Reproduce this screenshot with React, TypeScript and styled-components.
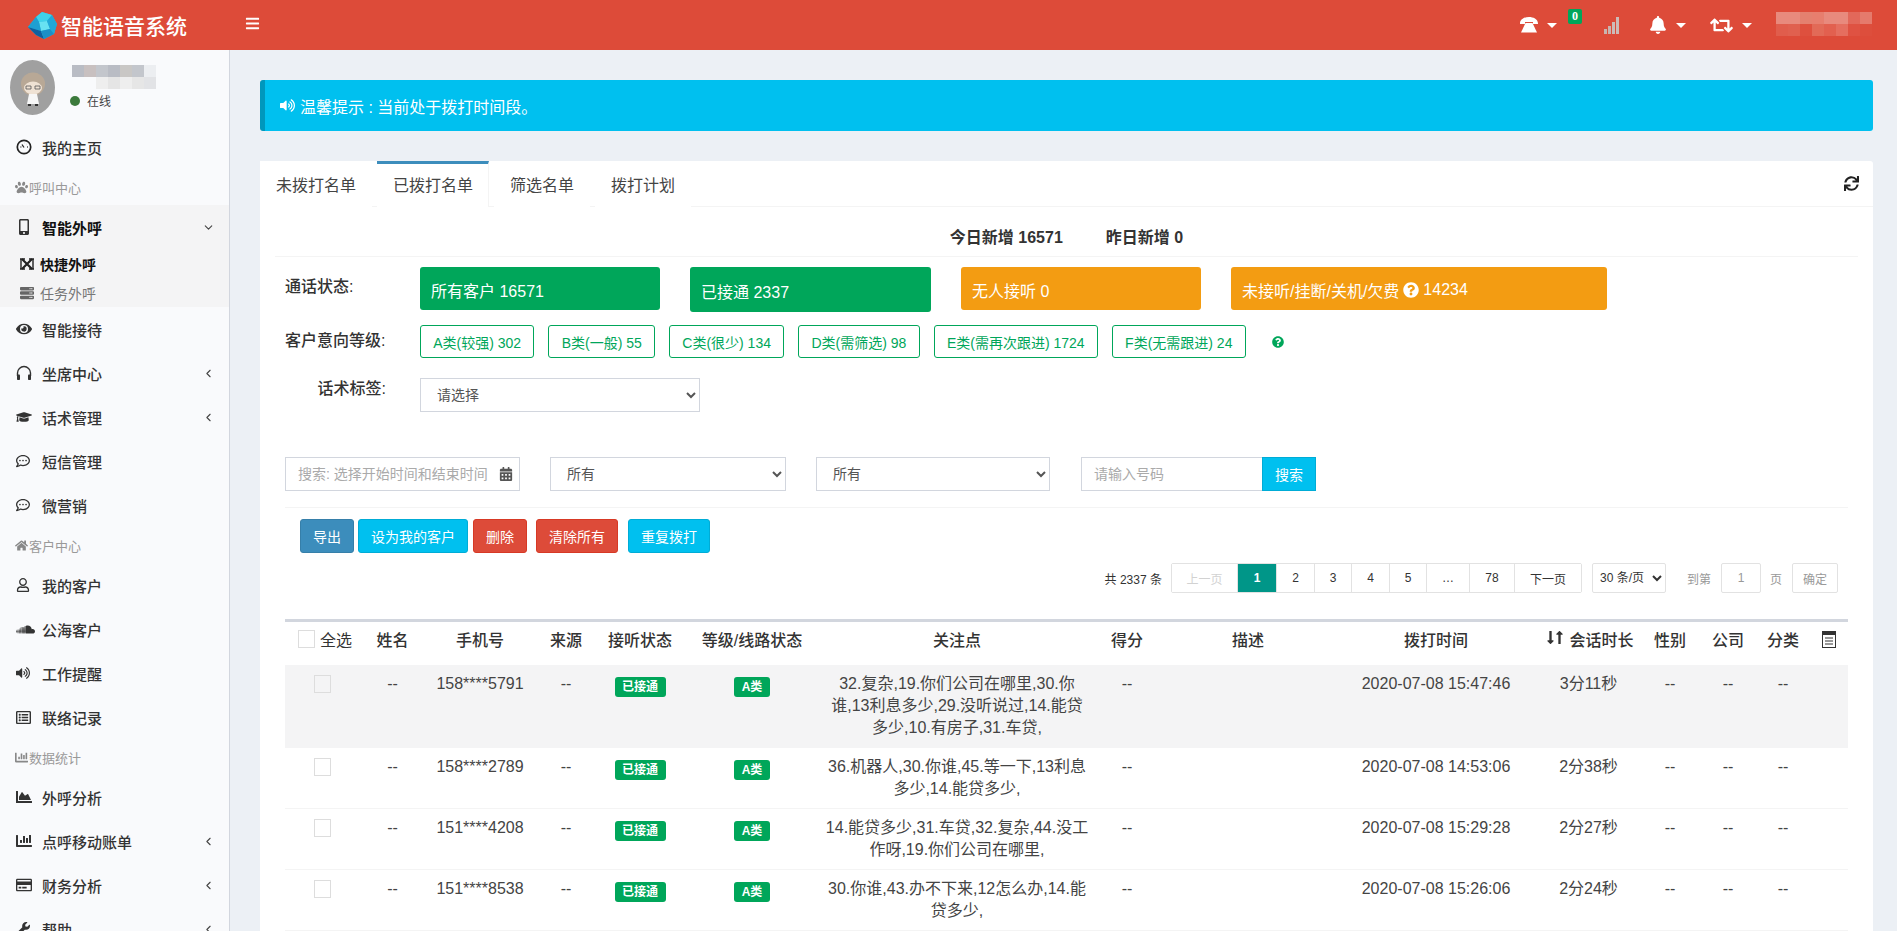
import React from 'react';
import styled, { createGlobalStyle } from 'styled-components';
import {
  FaBars, FaBell, FaRetweet, FaSync, FaEye, FaGraduationCap, FaRegCommentDots, FaPaw, FaHome,
  FaRegUser, FaSoundcloud, FaVolumeUp, FaRegListAlt, FaChartBar, FaChartArea, FaRegCreditCard, FaWrench,
  FaMobileAlt, FaServer, FaQuestionCircle, FaCalendarAlt, FaLongArrowAltDown, FaLongArrowAltUp,
} from 'react-icons/fa';
import { FiChevronDown, FiChevronLeft } from 'react-icons/fi';

const Global = createGlobalStyle`
  html, body { margin: 0; padding: 0; height: 100%; overflow: hidden; }
  body { font-family: "Liberation Sans", "Noto Sans CJK SC", sans-serif; color: #333; background: #ecf0f5; }
  * { box-sizing: border-box; }
`;

const Page = styled.div`display:flex;flex-direction:column;height:931px;overflow:hidden;`;
const TopBar = styled.header`flex:none;height:50px;background:#dd4b39;display:flex;align-items:center;color:#fff;padding-right:25px;`;
const Brand = styled.div`width:230px;display:flex;align-items:center;padding-left:28px;gap:3px;font-size:21px;font-weight:500;`;
const Toggle = styled.div`display:flex;font-size:15px;padding-left:15px;margin-top:-4px;`;
const NavRight = styled.nav`margin-left:auto;display:flex;align-items:center;`;
const NavItem = styled.div<{ $w: number }>`position:relative;width:${p => p.$w}px;display:flex;align-items:center;gap:9px;`;
const Caret = styled.span`width:0;height:0;border-left:5px solid transparent;border-right:5px solid transparent;border-top:5px solid #fff;`;
const NavBadge = styled.span`position:absolute;left:48px;top:-8px;width:14px;height:15px;background:#00a65a;border-radius:2px;font:bold 12px/14px "Liberation Serif",serif;text-align:center;color:#fff;`;
const MosaicBox = styled.svg`display:block;flex:none;`;

const Body = styled.div`flex:1;display:flex;min-height:0;`;
const Sidebar = styled.aside`flex:none;width:230px;background:#f9fafc;border-right:1px solid #d2d6de;overflow:hidden;`;
const UserPanel = styled.div`height:75px;display:flex;padding:10px 0 0 10px;`;
const UserMeta = styled.div`margin-left:17px;padding-top:5px;`;
const Online = styled.div`display:flex;align-items:center;font-size:12px;color:#444;margin-top:2px;gap:7px;`;
const Dot = styled.span`width:10px;height:10px;border-radius:50%;background:#3c7a3c;margin-left:-2px;`;
const MenuItem = styled.div<{ $active?: boolean }>`height:44px;display:flex;align-items:center;font-size:15px;font-weight:${p => p.$active ? 700 : 500};color:${p => p.$active ? '#111' : '#333'};padding:0 14px 0 16px;`;
const MenuIcon = styled.span`width:26px;flex:none;display:flex;justify-content:flex-start;font-size:16px;color:#333;`;
const MenuArrow = styled.span`margin-left:auto;display:flex;font-size:13px;color:#444;`;
const SectionLabel = styled.div`height:36px;display:flex;align-items:center;font-size:13px;color:#999;padding-left:15px;gap:1px;`;
const OpenGroup = styled.div`background:#f4f4f5;height:102px;`;
const SubItem = styled.div<{ $active?: boolean }>`height:29px;display:flex;align-items:center;font-size:14px;font-weight:${p => p.$active ? 700 : 400};color:${p => p.$active ? '#111' : '#777'};padding-left:20px;gap:6px;`;

const Content = styled.main`flex:1;min-width:0;padding:30px 24px 0 30px;overflow:hidden;`;
const Alert = styled.div`height:51px;background:#00c0ef;border-left:5px solid #0097bc;border-radius:3px;color:#fff;font-size:16px;display:flex;align-items:center;padding-left:15px;gap:5px;`;
const Card = styled.section`margin-top:30px;background:#fff;border-radius:3px 3px 0 0;height:800px;`;
const TabBar = styled.div`height:46px;display:flex;border-bottom:1px solid #f4f4f4;`;
const Tab = styled.div<{ $active?: boolean }>`height:46px;padding:0 16px;margin-right:5px;display:flex;align-items:center;font-size:16px;color:#444;background:#fff;
  ${p => p.$active ? 'border-top:3px solid #3c8dbc;border-right:1px solid #f4f4f4;padding:0 15px 3px 16px;margin-right:5px;' : ''}`;
const Refresh = styled.div`margin-left:auto;display:flex;align-items:center;padding-right:14px;font-size:15px;color:#222;`;
const Panel = styled.div`padding:0 15px;`;
const Summary = styled.div`height:50px;border-bottom:1px solid #f4f4f4;display:flex;justify-content:center;align-items:center;gap:43px;font-size:16px;font-weight:600;color:#333;padding-top:8px;`;
const Form = styled.div`padding:0 10px;`;
const Row = styled.div<{ $top: number }>`display:flex;align-items:flex-start;margin-top:${p => p.$top}px;`;
const Label = styled.div<{ $lh: number; $right?: boolean }>`flex:none;width:135px;padding-right:34px;font-size:16px;font-weight:500;color:#333;line-height:${p => p.$lh}px;text-align:${p => p.$right ? 'right' : 'left'};`;
const StatusGroup = styled.div`display:flex;align-items:flex-start;gap:30px;`;
const StatusButton = styled.div<{ $w: number; $h: number; $tone: string }>`width:${p => p.$w}px;height:${p => p.$h}px;background:${p => p.$tone};border-radius:3px;color:#fff;font-size:16px;display:flex;align-items:center;gap:4px;padding:2px 0 0 11px;`;
const LevelGroup = styled.div`display:flex;align-items:center;gap:14px;`;
const LevelButton = styled.div`height:33px;padding:0 12.25px;border:1px solid #00a65a;border-radius:3px;color:#00a65a;font-size:14px;display:flex;align-items:center;white-space:nowrap;`;
const HelpMark = styled.span`display:flex;font-size:12px;color:#00a65a;margin-left:12px;`;
const Select = styled.select<{ $w: number }>`width:${p => p.$w}px;height:34px;border:1px solid #d2d6de;background:#fff;border-radius:0;padding:0 12px;font-size:14px;font-family:inherit;color:#555;`;
const SearchRow = styled.div`display:flex;align-items:center;margin-top:45px;padding-bottom:16px;border-bottom:1px solid #f4f4f4;`;
const DateField = styled.div`width:235px;height:34px;border:1px solid #d2d6de;display:flex;align-items:center;padding:0 6px 0 12px;color:#555;font-size:14px;margin-right:30px;`;
const Field = styled.input`flex:1;min-width:0;border:none;outline:none;font:14px "Liberation Sans","Noto Sans CJK SC",sans-serif;padding:0;color:#555;&::placeholder{color:#aaa;}`;
const PhoneInput = styled.input`width:181px;height:34px;border:1px solid #d2d6de;border-right:none;outline:none;padding:0 12px;font:14px "Liberation Sans","Noto Sans CJK SC",sans-serif;&::placeholder{color:#aaa;}`;
const SearchButton = styled.div`width:54px;height:34px;background:#00c0ef;border:1px solid #00acd6;color:#fff;font-size:14px;display:flex;align-items:center;justify-content:center;`;
const Spaced = styled.div<{ $r: number }>`display:flex;margin-right:${p => p.$r}px;`;
const Actions = styled.div`display:flex;margin-top:11px;padding-left:15px;`;
const ActionButton = styled.div<{ $w: number; $tone: string; $edge: string; $r: number }>`width:${p => p.$w}px;height:34px;margin-right:${p => p.$r}px;background:${p => p.$tone};border:1px solid ${p => p.$edge};border-radius:3px;color:#fff;font-size:14px;display:flex;align-items:center;justify-content:center;`;
const Pager = styled.div`display:flex;align-items:center;justify-content:flex-end;margin-top:10px;padding-right:10px;font-size:12px;color:#333;height:30px;`;
const PagerCount = styled.span`margin-right:9px;white-space:nowrap;`;
const PageGroup = styled.div`display:flex;height:30px;border:1px solid #e2e2e2;border-radius:2px;margin-right:10px;`;
const PageItem = styled.div<{ $w: number; $active?: boolean; $off?: boolean }>`width:${p => p.$w}px;display:flex;align-items:center;justify-content:center;border-right:1px solid #e2e2e2;
  background:${p => p.$active ? '#009688' : '#fff'};color:${p => p.$active ? '#fff' : p.$off ? '#d2d2d2' : '#333'};font-weight:${p => p.$active ? 700 : 400};&:last-child{border-right:none;}`;
const PageSize = styled.select`width:74px;height:30px;border:1px solid #e2e2e2;border-radius:2px;background:#fff;font:12px "Liberation Sans","Noto Sans CJK SC",sans-serif;color:#333;padding:0 0 0 3px;margin-right:21px;`;
const PagerMuted = styled.span`color:#999;margin-right:10px;white-space:nowrap;`;
const PagerBox = styled.div<{ $w: number; $muted?: boolean }>`width:${p => p.$w}px;height:30px;border:1px solid #e2e2e2;border-radius:2px;display:flex;align-items:center;justify-content:center;color:#999;margin-right:${p => p.$muted ? 0 : 9}px;`;

const Table = styled.table`width:1563px;margin-top:26px;table-layout:fixed;border-collapse:collapse;border-top:3px solid #d2d6de;`;
const Th = styled.th`height:44px;padding:0 0 8px;font-size:16px;font-weight:500;color:#333;text-align:center;white-space:nowrap;`;
const ThInner = styled.span`display:inline-flex;align-items:center;justify-content:center;gap:2px;vertical-align:middle;`;
const SelectAll = styled.span`display:flex;align-items:center;gap:5px;font-weight:400;padding-left:13px;`;
const Check = styled.span`display:inline-block;width:17px;height:18px;border:1px solid #ddd;vertical-align:top;`;
const Tr = styled.tr<{ $shaded?: boolean; $tall?: boolean }>`background:${p => p.$shaded ? '#f4f4f5' : '#fff'};height:${p => p.$tall ? 83 : 61}px;border-bottom:${p => p.$shaded ? 'none' : '1px solid #f4f4f4'};`;
const Td = styled.td`padding:8px 0 7px;font-size:16px;line-height:22.4px;color:#444;text-align:center;vertical-align:top;`;
const CheckCell = styled.span`display:block;margin-top:2px;line-height:0;`;
const Badge = styled.span<{ $w: number }>`display:inline-block;width:${p => p.$w}px;height:20px;margin-top:4px;background:#00a65a;border-radius:3px;color:#fff;font-size:12px;font-weight:700;line-height:20px;text-align:center;vertical-align:top;`;

const cellsFor = (colors: (string | null)[][], w: number, h: number) =>
  colors.flatMap((row, y) => row.map((c, x) => c ? <rect key={`${x}-${y}`} x={x * w} y={y * h} width={w} height={h} fill={c} /> : null));

const Gem = () => (
  <svg width="30" height="27" viewBox="0 0 30 27">
    <polygon points="0,15 8,5 14,0 24,3 29,12 26,22 16,27 8,23" fill="#26b6dc" />
    <polygon points="8,5 14,0 24,3 19,9 11,10" fill="#3fd2ea" />
    <polygon points="11,10 19,9 22,17 13,19" fill="#68e2f2" />
    <polygon points="19,9 24,3 29,12 26,22 22,17" fill="#22a8d8" />
    <polygon points="0,15 8,5 11,10 13,19" fill="#1f9fd2" />
    <polygon points="0,15 13,19 16,27 8,23" fill="#115f9e" />
    <polygon points="13,19 22,17 26,22 16,27" fill="#1c8fc6" />
  </svg>
);
const Avatar = () => (
  <svg width="45" height="55" viewBox="0 0 45 55">
    <ellipse cx="22.5" cy="27.5" rx="22.5" ry="27.5" fill="#a0a0a0" />
    <ellipse cx="23" cy="24" rx="12" ry="11.5" fill="#b8a896" />
    <ellipse cx="23" cy="28" rx="9" ry="6.5" fill="#efe2d4" />
    <path d="M16 26h5v3h-5zM25 26h5v3h-5z" fill="none" stroke="#555" strokeWidth=".8" />
    <path d="M19 34h8l2 10H17z" fill="#f7f7f7" />
    <path d="M18 44h3v2h-3zM25 44h3v2h-3z" fill="#333" />
  </svg>
);
const OldPhone = () => (
  <svg width="18" height="16" viewBox="0 0 18 16">
    <path d="M0 6.5C0 2 5 0 9 0s9 2 9 6.5V7h-5V5H5v2H0z" fill="#fff" />
    <path d="M5.5 6h7L17 15.5H1z" fill="#fff" />
  </svg>
);
const Signal = () => (
  <svg width="16" height="17" viewBox="0 0 16 17">
    <rect x="0" y="12" width="3" height="5" fill="#c9b3ae" />
    <rect x="4" y="9" width="3" height="8" fill="#c9b3ae" />
    <rect x="8" y="5" width="3" height="12" fill="#cdbbb7" />
    <rect x="12" y="0" width="3" height="17" fill="#cdbbb7" />
  </svg>
);
const Dial = () => (
  <svg width="16" height="16" viewBox="0 0 16 16">
    <circle cx="8" cy="8" r="6.7" fill="none" stroke="#222" strokeWidth="1.7" />
    <path d="M8 8.5 6 5.5M4.5 8h.8M11 8h.8M8 4h.1M10.6 5.5h.1" stroke="#222" strokeWidth="1.3" />
  </svg>
);
const CrossMark = () => (
  <svg width="14" height="12" viewBox="0 0 14 12">
    <path d="M2 1l10 10M12 1 2 11" stroke="#222" strokeWidth="2.2" />
    <path d="M0 1h5M9 1h5M0 11h5M9 11h5M1 1v10M13 1v10" stroke="#222" strokeWidth="1.4" />
  </svg>
);
const Headset = () => (
  <svg width="16" height="16" viewBox="0 0 16 16">
    <path d="M1.5 11V8a6.5 6.5 0 0 1 13 0v3" fill="none" stroke="#333" strokeWidth="1.4" />
    <rect x="1" y="9.5" width="3" height="5.5" rx=".8" fill="#333" />
    <rect x="12" y="9.5" width="3" height="5.5" rx=".8" fill="#333" />
  </svg>
);
const Columns = () => (
  <svg width="15" height="18" viewBox="0 0 15 18">
    <rect x="0.5" y="0.5" width="13" height="16" fill="#fff" stroke="#333" />
    <rect x="0" y="0" width="14" height="4" fill="#333" />
    <path d="M3 7h8M3 10h8M3 13h8" stroke="#333" />
  </svg>
);

const icon = (node: React.ReactNode) => <MenuIcon>{node}</MenuIcon>;
const left = <MenuArrow><FiChevronLeft /></MenuArrow>;

const levels = ['A类(较强) 302', 'B类(一般) 55', 'C类(很少) 134', 'D类(需筛选) 98', 'E类(需再次跟进) 1724', 'F类(无需跟进) 24'];
const pages: { t: string; w: number; active?: boolean; off?: boolean }[] = [
  { t: '上一页', w: 66, off: true }, { t: '1', w: 39, active: true }, { t: '2', w: 38 }, { t: '3', w: 37 }, { t: '4', w: 38 },
  { t: '5', w: 37 }, { t: '…', w: 43 }, { t: '78', w: 45 }, { t: '下一页', w: 66 },
];
const widths = [75, 65, 110, 62, 86, 138, 272, 68, 174, 202, 103, 60, 56, 54, 38];
const rows = [
  { phone: '158****5791', lines: ['32.复杂,19.你们公司在哪里,30.你', '谁,13利息多少,29.没听说过,14.能贷', '多少,10.有房子,31.车贷,'], time: '2020-07-08 15:47:46', dur: '3分11秒' },
  { phone: '158****2789', lines: ['36.机器人,30.你谁,45.等一下,13利息', '多少,14.能贷多少,'], time: '2020-07-08 14:53:06', dur: '2分38秒' },
  { phone: '151****4208', lines: ['14.能贷多少,31.车贷,32.复杂,44.没工', '作呀,19.你们公司在哪里,'], time: '2020-07-08 15:29:28', dur: '2分27秒' },
  { phone: '151****8538', lines: ['30.你谁,43.办不下来,12怎么办,14.能', '贷多少,'], time: '2020-07-08 15:26:06', dur: '2分24秒' },
];

export default function App() {
  return (
    <Page>
      <Global />
      <TopBar>
        <Brand><Gem />智能语音系统</Brand>
        <Toggle><FaBars /></Toggle>
        <NavRight>
          <NavItem $w={84}><OldPhone /><Caret /><NavBadge>0</NavBadge></NavItem>
          <NavItem $w={45}><Signal /></NavItem>
          <NavItem $w={61}><FaBell size={18} /><Caret /></NavItem>
          <NavItem $w={66}><FaRetweet size={23} /><Caret /></NavItem>
          <MosaicBox width="96" height="26" viewBox="0 0 96 26">
            {cellsFor([
              ['#e88a7d', '#e88a7d', '#e4806f', '#e77e6e', '#e88a7d', '#e88a7d', '#e2685a', '#e57a6c'],
              ['#e05d4c', '#e0604f', '#de503e', '#e26a57', '#e2604f', '#e56e5f', '#df5242', '#dd4e3c'],
            ], 12, 12)}
          </MosaicBox>
        </NavRight>
      </TopBar>
      <Body>
        <Sidebar>
          <UserPanel>
            <Avatar />
            <UserMeta>
              <MosaicBox width="84" height="25" viewBox="0 0 84 25">
                {cellsFor([
                  ['#b9bcc4', '#c8c0c0', '#c3c6cc', '#b9bcc4', '#c9c7c5', '#c3c6cc', '#eceef1'],
                  [null, null, '#eeeeee', '#e5e5e5', '#eeeeee', '#e6e6e6', '#e2e3e6'],
                ], 12, 12)}
              </MosaicBox>
              <Online><Dot />在线</Online>
            </UserMeta>
          </UserPanel>
          <MenuItem>{icon(<Dial />)}我的主页</MenuItem>
          <SectionLabel><FaPaw color="#888" size={13} />呼叫中心</SectionLabel>
          <OpenGroup>
            <MenuItem $active>{icon(<FaMobileAlt />)}智能外呼<MenuArrow><FiChevronDown /></MenuArrow></MenuItem>
            <SubItem $active><CrossMark />快捷外呼</SubItem>
            <SubItem><FaServer size={14} color="#666" />任务外呼</SubItem>
          </OpenGroup>
          <MenuItem>{icon(<FaEye />)}智能接待</MenuItem>
          <MenuItem>{icon(<Headset />)}坐席中心{left}</MenuItem>
          <MenuItem>{icon(<FaGraduationCap />)}话术管理{left}</MenuItem>
          <MenuItem>{icon(<FaRegCommentDots size={14} />)}短信管理</MenuItem>
          <MenuItem>{icon(<FaRegCommentDots size={14} />)}微营销</MenuItem>
          <SectionLabel><FaHome color="#888" size={13} />客户中心</SectionLabel>
          <MenuItem>{icon(<FaRegUser size={14} />)}我的客户</MenuItem>
          <MenuItem>{icon(<FaSoundcloud size={19} />)}公海客户</MenuItem>
          <MenuItem>{icon(<FaVolumeUp size={14} />)}工作提醒</MenuItem>
          <MenuItem>{icon(<FaRegListAlt size={15} />)}联络记录</MenuItem>
          <SectionLabel><FaChartBar color="#888" size={13} />数据统计</SectionLabel>
          <MenuItem>{icon(<FaChartArea />)}外呼分析</MenuItem>
          <MenuItem>{icon(<FaChartBar />)}点呼移动账单{left}</MenuItem>
          <MenuItem>{icon(<FaRegCreditCard />)}财务分析{left}</MenuItem>
          <MenuItem>{icon(<FaWrench size={14} />)}帮助{left}</MenuItem>
        </Sidebar>
        <Content>
          <Alert><FaVolumeUp size={15} />温馨提示 : 当前处于拨打时间段。</Alert>
          <Card>
            <TabBar>
              <Tab>未拨打名单</Tab>
              <Tab $active>已拨打名单</Tab>
              <Tab>筛选名单</Tab>
              <Tab>拨打计划</Tab>
              <Refresh><FaSync /></Refresh>
            </TabBar>
            <Panel>
              <Summary><span>今日新增 16571</span><span>昨日新增 0</span></Summary>
              <Form>
                <Row $top={10}>
                  <Label $lh={40}>通话状态:</Label>
                  <StatusGroup>
                    <StatusButton $w={240} $h={43} $tone="#00a65a">所有客户 16571</StatusButton>
                    <StatusButton $w={241} $h={45} $tone="#00a65a">已接通 2337</StatusButton>
                    <StatusButton $w={240} $h={43} $tone="#f39c12">无人接听 0</StatusButton>
                    <StatusButton $w={376} $h={43} $tone="#f39c12">未接听/挂断/关机/欠费 <FaQuestionCircle size={16} /> 14234</StatusButton>
                  </StatusGroup>
                </Row>
                <Row $top={13}>
                  <Label $lh={32}>客户意向等级:</Label>
                  <LevelGroup>
                    {levels.map(l => <LevelButton key={l}>{l}</LevelButton>)}
                    <HelpMark><FaQuestionCircle /></HelpMark>
                  </LevelGroup>
                </Row>
                <Row $top={20}>
                  <Label $lh={22} $right>话术标签:</Label>
                  <Select $w={280} defaultValue="请选择"><option>请选择</option></Select>
                </Row>
                <SearchRow>
                  <DateField><Field placeholder="搜索: 选择开始时间和结束时间" /><FaCalendarAlt size={14} color="#555" /></DateField>
                  <Spaced $r={30}><Select $w={236}><option>所有</option></Select></Spaced>
                  <Spaced $r={31}><Select $w={234}><option>所有</option></Select></Spaced>
                  <PhoneInput placeholder="请输入号码" />
                  <SearchButton>搜索</SearchButton>
                </SearchRow>
                <Actions>
                  <ActionButton $w={54} $r={4} $tone="#3c8dbc" $edge="#367fa9">导出</ActionButton>
                  <ActionButton $w={110} $r={5} $tone="#00c0ef" $edge="#00acd6">设为我的客户</ActionButton>
                  <ActionButton $w={54} $r={9} $tone="#dd4b39" $edge="#d73925">删除</ActionButton>
                  <ActionButton $w={82} $r={10} $tone="#dd4b39" $edge="#d73925">清除所有</ActionButton>
                  <ActionButton $w={82} $r={0} $tone="#00c0ef" $edge="#00acd6">重复拨打</ActionButton>
                </Actions>
                <Pager>
                  <PagerCount>共 2337 条</PagerCount>
                  <PageGroup>
                    {pages.map(p => <PageItem key={p.t} $w={p.w} $active={p.active} $off={p.off}>{p.t}</PageItem>)}
                  </PageGroup>
                  <PageSize><option>30 条/页</option></PageSize>
                  <PagerMuted>到第</PagerMuted>
                  <PagerBox $w={40}>1</PagerBox>
                  <PagerMuted>页</PagerMuted>
                  <PagerBox $w={46} $muted>确定</PagerBox>
                </Pager>
                <Table>
                  <colgroup>{widths.map((w, i) => <col key={i} style={{ width: w }} />)}</colgroup>
                  <thead>
                    <tr>
                      <Th><SelectAll><Check />全选</SelectAll></Th>
                      <Th>姓名</Th><Th>手机号</Th><Th>来源</Th><Th>接听状态</Th><Th>等级/线路状态</Th><Th>关注点</Th>
                      <Th>得分</Th><Th>描述</Th><Th>拨打时间</Th>
                      <Th><ThInner><span><FaLongArrowAltDown size={15} /><FaLongArrowAltUp size={15} style={{ marginLeft: -6 }} /></span>会话时长</ThInner></Th>
                      <Th>性别</Th><Th>公司</Th><Th>分类</Th><Th><ThInner><Columns /></ThInner></Th>
                    </tr>
                  </thead>
                  <tbody>
                    {rows.map((r, i) => (
                      <Tr key={r.phone} $shaded={i === 0} $tall={i === 0}>
                        <Td><CheckCell><Check /></CheckCell></Td>
                        <Td>--</Td>
                        <Td>{r.phone}</Td>
                        <Td>--</Td>
                        <Td><Badge $w={51}>已接通</Badge></Td>
                        <Td><Badge $w={36}>A类</Badge></Td>
                        <Td>{r.lines.map((l, j) => <React.Fragment key={j}>{l}{j < r.lines.length - 1 && <br />}</React.Fragment>)}</Td>
                        <Td>--</Td>
                        <Td />
                        <Td>{r.time}</Td>
                        <Td>{r.dur}</Td>
                        <Td>--</Td>
                        <Td>--</Td>
                        <Td>--</Td>
                        <Td />
                      </Tr>
                    ))}
                  </tbody>
                </Table>
              </Form>
            </Panel>
          </Card>
        </Content>
      </Body>
    </Page>
  );
}
